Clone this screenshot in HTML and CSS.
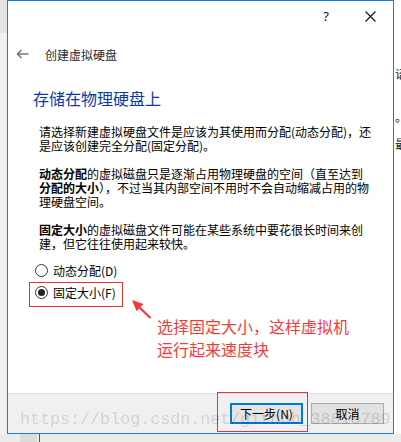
FILE: index.html
```html
<!DOCTYPE html>
<html lang="zh-CN">
<head>
    <meta charset="UTF-8">
    <meta name="viewport" content="width=device-width, initial-scale=1.0">
    <title>创建虚拟硬盘</title>
    <link rel="stylesheet" href="styles.css">
</head>
<body>

<div class="screen">
    <div class="edge-left"></div>

    <div class="window">
        <div class="panel">
            <!-- Title bar -->
            <div class="titlebar">
                <span class="help">?</span>
                <svg class="close" width="11" height="11" viewBox="0 0 11 11">
                    <path d="M0.5 0.5 L10.5 10.5 M10.5 0.5 L0.5 10.5" stroke="#111" stroke-width="1.1" fill="none"/>
                </svg>
            </div>

            <div class="nav">
                <svg class="back" width="13" height="10" viewBox="0 0 13 10">
                    <path d="M12.5 5 H1.5 M5.5 1 L1.5 5 L5.5 9" stroke="#7a7a7a" stroke-width="1.6" fill="none"/>
                </svg>
                <span class="nav-title">创建虚拟硬盘</span>
            </div>

            <h1 class="heading">存储在物理硬盘上</h1>

            <p class="desc">请选择新建虚拟硬盘文件是应该为其使用而分配(动态分配)，还<br>是应该创建完全分配(固定分配)。</p>
            <p class="desc"><b>动态分配</b>的虚拟磁盘只是逐渐占用物理硬盘的空间（直至达到<br><b>分配的大小</b>），不过当其内部空间不用时不会自动缩减占用的物<br>理硬盘空间。</p>
            <p class="desc"><b>固定大小</b>的虚拟磁盘文件可能在某些系统中要花很长时间来创<br>建，但它往往使用起来较快。</p>

            <div class="choices">
                <label class="choice"><span class="radio"></span>动态分配(D)</label>
                <label class="choice marked"><span class="radio checked"></span>固定大小(F)</label>
            </div>

            <p class="note">选择固定大小，这样虚拟机<br>运行起来速度块</p>

            <!-- annotation arrow -->
            <svg class="pointer" width="24" height="24" viewBox="0 0 24 24">
                <path d="M9 10 L20.5 21" stroke="#f03a3a" stroke-width="2.2" fill="none"/>
                <polygon points="2,3 6.6,14.2 13.4,7" fill="#f03a3a"/>
            </svg>
        </div>

        <div class="footer">
            <button class="btn primary">下一步(N)</button>
            <button class="btn">取消</button>
        </div>

        <div class="mark-box"></div>
        <div class="watermark">https://blog.csdn.net/github_38818789</div>
    </div>

    <div class="edge-right">
        <span class="peek peek-1">诏</span>
        <span class="peek peek-2">。</span>
        <span class="peek peek-3">最</span>
    </div>
</div>

<div class="floor">
    <span class="floor-block"></span>
    <span class="floor-line"></span>
</div>

</body>
</html>
```

FILE: styles.css
```css
body {
    margin: 0;
    background: #ececec;
    font-family: "Noto Sans CJK SC", "Noto Sans", sans-serif;
    color: #000;
}

.screen {
    display: flex;
    height: 434px;
}

.edge-left {
    width: 7px;
    background: linear-gradient(#e4e4e4 0 33px, #f1f1f1 33px);
}

.edge-right {
    width: 7px;
    background: #fff;
    overflow: hidden;
    display: flex;
    flex-direction: column;
    font-size: 12px;
    line-height: 13px;
    color: #222;
}

.peek {
    display: block;
    margin-left: 1px;
    white-space: nowrap;
}

.peek-1 { margin-top: 67px; }
.peek-2 { margin-top: 30px; }
.peek-3 { margin-top: 14px; }

/* Dialog window */
.window {
    position: relative;
    width: 387px;
    box-sizing: border-box;
    border: 1px solid #1a7fd4;
    background: #fff;
    display: flex;
    flex-direction: column;
}

.panel {
    position: relative;
    height: 392px;
}

.titlebar {
    height: 30px;
    display: flex;
    align-items: center;
    justify-content: flex-end;
    padding-right: 17px;
}

.help {
    font-family: "Noto Sans", sans-serif;
    font-size: 13px;
    margin-right: 36px;
    color: #111;
}

.close {
    display: block;
}

.nav {
    height: 24px;
    margin-top: 11px;
    display: flex;
    align-items: center;
    padding-left: 8px;
}

.back {
    display: block;
}

.nav-title {
    margin-left: 16px;
    font-size: 12px;
    color: #2a2a2a;
}

.heading {
    margin: 21px 0 0 25px;
    font-size: 16px;
    line-height: 22px;
    font-weight: normal;
    color: #0a3aa6;
}

.desc {
    margin: 16px 0 0 31px;
    font-size: 12px;
    line-height: 14px;
    white-space: nowrap;
}

.desc + .desc {
    margin-top: 14px;
}

.desc b {
    font-weight: bold;
}

.choices {
    margin: 9px 0 0 21px;
    display: flex;
    flex-direction: column;
    align-items: flex-start;
}

.choice {
    display: flex;
    align-items: center;
    gap: 5px;
    width: 94px;
    box-sizing: border-box;
    padding: 2px 6px 3px 5px;
    border: 1px solid transparent;
    font-size: 12px;
    line-height: 15px;
    white-space: nowrap;
}

.choice.marked {
    padding-bottom: 6px;
    border-color: #e8322f;
}

.radio {
    flex: none;
    width: 13px;
    height: 13px;
    box-sizing: border-box;
    border: 1px solid #333;
    border-radius: 50%;
    background: #fff;
    display: flex;
    align-items: center;
    justify-content: center;
}

.radio.checked::after {
    content: "";
    width: 7px;
    height: 7px;
    border-radius: 50%;
    background: #222;
}

.note {
    margin: 8px 0 0 149px;
    font-size: 16px;
    line-height: 23px;
    color: #f23c3c;
}

.pointer {
    position: absolute;
    left: 122px;
    top: 296px;
}

/* Footer */
.footer {
    flex: 1;
    background: #f0f0f0;
    border-top: 1px solid #dedede;
    display: flex;
    justify-content: flex-end;
    align-items: flex-start;
    gap: 8px;
    padding: 9px 9px 0 0;
}

.btn {
    width: 73px;
    height: 21px;
    box-sizing: border-box;
    border: 1px solid #adadad;
    background: #e1e1e1;
    font-family: "Noto Sans CJK SC", "Noto Sans", sans-serif;
    font-size: 12px;
    line-height: 17px;
    padding: 0;
    color: #000;
}

.btn.primary {
    border: 2px solid #0078d7;
    background: #e5e5e5;
}

.mark-box {
    position: absolute;
    left: 209px;
    top: 391px;
    width: 91px;
    height: 40px;
    box-sizing: border-box;
    border: 1px solid #e8322f;
}

.watermark {
    position: absolute;
    left: 12px;
    top: 409px;
    font-family: "Liberation Mono", monospace;
    font-size: 16.7px;
    line-height: 20px;
    color: rgba(0, 0, 0, 0.14);
    white-space: nowrap;
    pointer-events: none;
}

/* Desktop strip below the dialog */
.floor {
    height: 8px;
    display: flex;
    background: #ececec;
}

.floor-block {
    width: 17px;
    margin-left: 20px;
    background: #dcdcdc;
}

.floor-line {
    width: 1px;
    margin-left: 2px;
    background: #555;
}
```
